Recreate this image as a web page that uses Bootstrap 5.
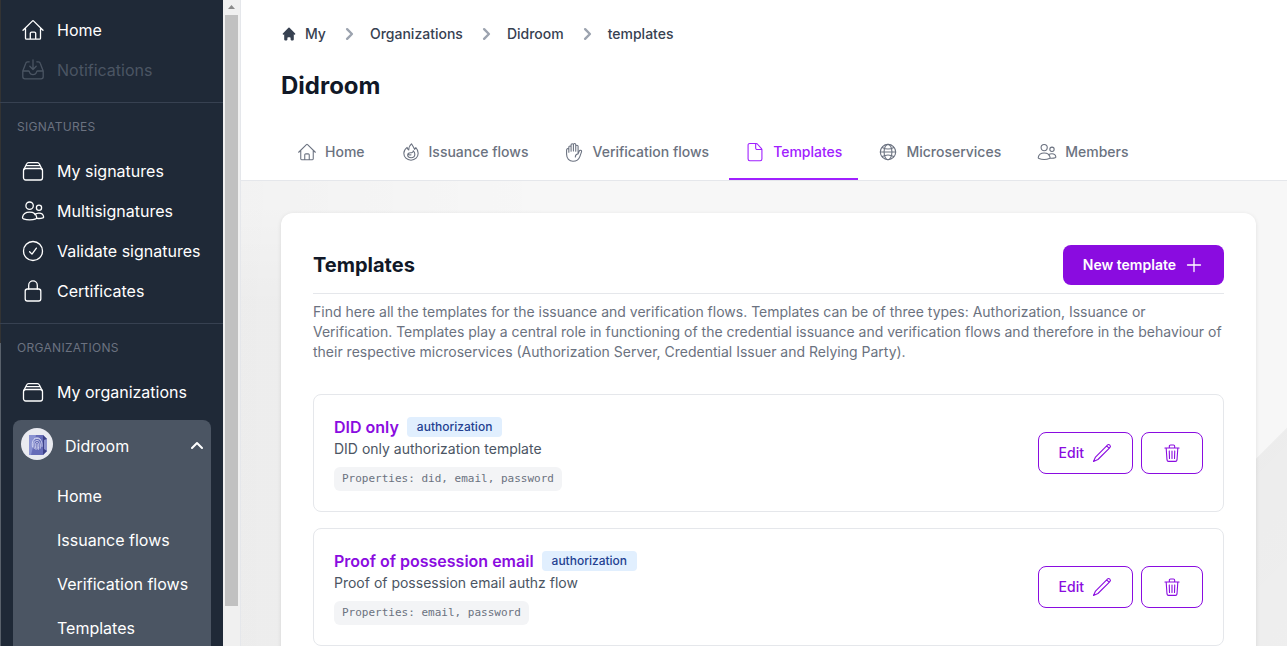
<!DOCTYPE html>
<html lang="en">
<head>
<meta charset="utf-8">
<meta name="viewport" content="width=device-width, initial-scale=1">
<title>Didroom – Templates</title>
<link href="https://cdn.jsdelivr.net/npm/bootstrap@5.3.0/dist/css/bootstrap.min.css" rel="stylesheet">
<style>
  :root { --line: #e5e7eb; --muted: #6b7280; --brand: #8a0ce0; --bright: #a020ff; }
  body { font-family: Inter, "Liberation Sans", sans-serif; font-size: 14px; line-height: 20px; color: #374151; }
  a { color: inherit; text-decoration: none; }
  .ico { fill: none; stroke: currentColor; stroke-width: 1.3; stroke-linecap: round; stroke-linejoin: round; flex: none; }
  .ico-bold { stroke-width: 2; }

  /* Sidebar */
  .side { flex: none; width: 241px; border-right: 1px solid var(--line); }
  .side-body { background: linear-gradient(#333 343px, #59616b 343px) 0 0 / 1px 100% no-repeat #1f2937; color: #fff; font-size: 16px; line-height: 24px; }
  .side-group { padding: 12px 12px 12px 13px; border-bottom: 1px solid #374151; }
  .side-group:first-child { padding-top: 10px; }
  .side-group:last-child { border-bottom: 0; }
  .side-link { padding: 8px; gap: 12px; }
  .side-link.off { color: #4b5563; }
  .side-label { font-size: 12px; line-height: 24px; color: var(--muted); padding: 0 4px; margin-bottom: 12px; letter-spacing: .025em; }
  .org { background: #4b5563; border-radius: 8px; margin-top: 8px; height: 400px; }
  .org-head { width: 100%; height: 52px; padding: 0 8px; gap: 12px; color: #fff; background: none; border: 0; }
  .org-logo { margin-bottom: 4px; }
  .org-menu { padding-top: 2px; }
  .org-link { padding: 10px 10px 10px 44px; }
  .bar { width: 17px; background: #f0f0f0; padding: 0 2px; }
  .bar-thumb { height: 591px; background: #c1c1c1; }

  /* Header */
  .top { padding: 22px 40px 0; border-bottom: 1px solid var(--line); }
  .crumbs { gap: 12px; height: 24px; font-weight: 500; }
  .crumbs .ico { color: #9ca3af; }
  .page-title { font-size: 24px; line-height: 32px; font-weight: 700; color: #111827; }
  .tabs { gap: 4px; font-weight: 500; }
  .tab-item { padding: 16px; border-bottom: 2px solid transparent; color: var(--muted); }
  .tab-item.active { color: var(--bright); border-color: var(--bright); }

  /* Content */
  .stage { padding: 32px 31px 32px 40px;
    background: linear-gradient(90deg, rgba(0,0,0,.02), transparent 30%),
      linear-gradient(135deg, transparent 85.5%, rgba(0,0,0,.045) 85.6%, rgba(0,0,0,.035)),
      linear-gradient(180deg, transparent 20px, rgba(0,0,0,.025) 120px) 0 0 / 300px 100% no-repeat #f7f7f7; }
  .panel { background: #fff; border-radius: 12px; padding: 32px; box-shadow: 0 1px 4px rgba(0,0,0,.1); }
  .panel-head { padding-bottom: 8px; border-bottom: 1px solid var(--line); }
  .panel-title { font-size: 20px; line-height: 28px; font-weight: 700; color: #111827; }
  .intro { color: var(--muted); margin: 8px 0 32px; }
  .tpl { border: 1px solid var(--line); border-radius: 8px; padding: 20px; color: #4b5563; }
  .tpl-name { font-size: 16px; line-height: 24px; font-weight: 600; color: var(--brand); }
  .tag { font-size: 12px; line-height: 20px; font-weight: 500; padding: 0 10px; border-radius: 4px; background: #e1effe; color: #233f91; }
  .props { font-family: "DejaVu Sans Mono", monospace; font-size: 11px; line-height: 24px; color: var(--muted); background: #f3f4f6; border-radius: 6px; padding: 0 8px; }
  .btn { --bs-btn-font-size: 14px; --bs-btn-line-height: 20px; --bs-btn-padding-x: 20px; --bs-btn-padding-y: 10px; --bs-btn-border-radius: 8px; }
  .btn-brand { --bs-btn-color: #fff; --bs-btn-bg: var(--brand); --bs-btn-hover-color: #fff; --bs-btn-hover-bg: #7509c0; --bs-btn-border-width: 0; --bs-btn-font-weight: 600; }
  .btn-line { --bs-btn-color: var(--brand); --bs-btn-border-color: var(--brand); --bs-btn-hover-color: #fff; --bs-btn-hover-bg: var(--brand); --bs-btn-font-weight: 500; }
</style>
</head>
<body>
<svg class="d-none">
  <symbol id="home" viewBox="0 0 24 24"><path d="M4.500 10.500v9.700a1 1 0 0 0 1 1h13a1 1 0 0 0 1-1v-9.700M2 12.300l9.300-9.200a1 1 0 0 1 1.400 0l9.300 9.200M9.300 21v-5.500a1.300 1.300 0 0 1 1.300-1.300h2.800a1.300 1.300 0 0 1 1.300 1.300V21"/></symbol>
  <symbol id="inbox" viewBox="0 0 24 24"><path d="M8.200 3.800H6.700c-1 0-1.800.6-2 1.600L1.800 13v5.700c0 1.200.9 2.100 2.100 2.100h16.200c1.200 0 2.100-.9 2.100-2.100V13l-2.900-7.600c-.2-1-1-1.600-2-1.600h-1.500M1.800 13h5.700c.7 0 .9.500 1 1.200.4 1.500 1.800 2.500 3.500 2.500s3.100-1 3.500-2.500c.1-.7.300-1.200 1-1.200h5.700M12 2v9.300M8.800 8.300 12 11.500l3.200-3.200"/></symbol>
  <symbol id="albums" viewBox="0 0 24 24"><rect x="2.500" y="9.500" width="19" height="11.500" rx="2.200"/><path d="M3 10.200 5.600 5c.4-.9.900-1.400 1.900-1.400h9c1 0 1.500.5 1.900 1.400l2.600 5.200M5 6.700h14"/></symbol>
  <symbol id="people" viewBox="0 0 24 24"><circle cx="8.600" cy="6.700" r="3.700"/><circle cx="18" cy="8.700" r="2.600"/><path d="M8.600 13.200c-3.800 0-6.600 2.200-7.100 5.200-.1.700.2 1.200.9 1.400 1.700.7 3.800 1.100 6.200 1.100s4.500-.4 6.200-1.100c.7-.2 1-.7.900-1.400-.5-3-3.300-5.200-7.100-5.200ZM13.800 15.500c1-.9 2.500-1.400 4.200-1.400 2.500 0 4.300 1.500 4.600 3.700.1.600-.1.900-.7 1.100-1.700.6-3.900.7-6.200.5"/></symbol>
  <symbol id="check" viewBox="0 0 24 24"><circle cx="12" cy="12" r="9.500"/><path d="m8.600 12.700 2.400 2.400 4.400-6"/></symbol>
  <symbol id="lock" viewBox="0 0 24 24"><rect x="4.200" y="10" width="15.600" height="12" rx="2.200"/><path d="M7.700 10V6.200a4.300 4.300 0 0 1 8.600 0V10"/></symbol>
  <symbol id="flame" viewBox="0 0 24 24"><path d="M12.600 2.200C10.400 3.900 9.400 6.300 9.300 9.500 8.100 8.900 7.500 7.900 7.300 6.400 4.800 8.300 3.400 10.900 3.400 13.600c0 4.700 3.700 8.200 8.600 8.200s8.600-3.500 8.600-8.200c0-2.700-1-4.900-2.800-6.800l-1.500 2C15.400 6.800 14 4.500 12.600 2.200Z"/><path d="M14.800 10.500c0 1.700-.8 2.300-2.200 2.500-2.900-.6-4.800.9-4.600 3 .3 1.900 1.900 2.800 4.100 2.800 2.800 0 4.500-1.700 4.500-4.200 0-1.600-.8-3-1.800-4.100ZM8.500 14.300c.8 1.200 2 1.600 3.500 1.100"/></symbol>
  <symbol id="hand" viewBox="0 0 24 24"><path d="M5.800 12.200V6.100a1.350 1.350 0 0 1 2.700 0V11M8.500 10.800V3.400a1.400 1.400 0 0 1 2.800 0v7.400M11.300 10V3.200a1.400 1.400 0 0 1 2.800 0v7.600M14.100 11V5.200a1.400 1.400 0 0 1 2.800 0v9M5.800 8.400c-1.400-1-2.700-.3-2.700 1.200v5.200c0 4.900 3.200 8.200 7.700 8.200 4.200 0 6.800-1.500 8.200-5.500l2-5.600c.4-1.100-.1-1.700-1-2-.9-.2-1.500.3-1.800 1.200l-1.300 3.100c-2.200.6-3.300 1.600-3.300 3.700"/></symbol>
  <symbol id="file" viewBox="0 0 24 24"><path d="M13.500 1.800H5.700a2 2 0 0 0-2 2v16.600a2 2 0 0 0 2 2h12.600a2 2 0 0 0 2-2V9.200a2 2 0 0 0-.5-1.300l-5-5.500a2 2 0 0 0-1.300-.6ZM12.800 1.900v5.400a1.700 1.700 0 0 0 1.700 1.700h5.600"/></symbol>
  <symbol id="globe" viewBox="0 0 24 24"><circle cx="12" cy="12" r="9.200"/><ellipse cx="12" cy="12" rx="4.700" ry="9.200"/><path d="M2.800 12h18.400M5 6.500c4 2.200 10 2.200 14 0M5 17.500c4-2.200 10-2.200 14 0"/></symbol>
  <symbol id="pencil" viewBox="0 0 24 24"><path d="M17.600 3.400 4.200 16.900l-2.400 5.300 5.300-2.400L20.600 6.400ZM17.600 3.400l.8-.8a2.100 2.100 0 0 1 3 3l-.8.8"/></symbol>
  <symbol id="trash" viewBox="0 0 24 24"><path d="m5 6 1 14.300c.1 1 .8 1.700 1.800 1.700h8.400c1 0 1.700-.7 1.800-1.700L19 6M3.500 6h17M8.800 6V3.900c0-.9.600-1.500 1.500-1.500h3.400c.9 0 1.500.6 1.500 1.500V6M12 9.500v9M8.700 9.500l.3 9M15.300 9.500l-.3 9"/></symbol>
  <symbol id="chev" viewBox="0 0 20 20"><path d="m7.600 6 4 4-4 4"/></symbol>
</svg>

<div class="d-flex vh-100 overflow-hidden">
  <aside class="side d-flex overflow-hidden">
    <nav class="side-body flex-grow-1" aria-label="Main">
      <div class="side-group">
        <a class="side-link d-flex" href="#"><svg class="ico" width="24" height="24"><use href="#home"/></svg>Home</a>
        <a class="side-link off d-flex" href="#"><svg class="ico" width="24" height="24"><use href="#inbox"/></svg>Notifications</a>
      </div>
      <div class="side-group">
        <div class="side-label">SIGNATURES</div>
        <a class="side-link d-flex" href="#"><svg class="ico" width="24" height="24"><use href="#albums"/></svg>My signatures</a>
        <a class="side-link d-flex" href="#"><svg class="ico" width="24" height="24"><use href="#people"/></svg>Multisignatures</a>
        <a class="side-link d-flex" href="#"><svg class="ico" width="24" height="24"><use href="#check"/></svg>Validate signatures</a>
        <a class="side-link d-flex" href="#"><svg class="ico" width="24" height="24"><use href="#lock"/></svg>Certificates</a>
      </div>
      <div class="side-group">
        <div class="side-label">ORGANIZATIONS</div>
        <a class="side-link d-flex" href="#"><svg class="ico" width="24" height="24"><use href="#albums"/></svg>My organizations</a>
        <div class="org">
          <button class="org-head d-flex align-items-center text-start" type="button" aria-expanded="true">
            <svg width="32" height="32" viewBox="0 0 32 32" class="org-logo flex-shrink-0">
              <circle cx="16" cy="16" r="16" fill="#e9eaf0"/>
              <path d="M8 7h14l4 4v12l-4 4H8z" fill="#666cb8"/><path d="M8 7h7l-5 20H8z" fill="#8a92d2"/><path d="m22 7 4 4v12l-4 4z" fill="#3c4087"/><path d="m23 12 3-1v12l-3-2z" fill="#8b91ce"/>
              <g fill="none" stroke="#dfe2f7" stroke-width=".8" stroke-linecap="round"><path d="M11.500 19c-1-6 1-8.500 4.500-8.500s5.500 2.800 5 8M13.300 20.500c-1.200-5 0-8 2.700-8s3.700 2.500 3.200 7.800M15 21.500c-1-4-.8-7 1-7s1.900 2.500 1.300 7M16.100 16.500l.1 4M13 11c1.500-1.800 5-1.800 6.500.5"/></g>
            </svg>
            <span class="flex-grow-1">Didroom</span>
            <svg class="ico ico-bold" width="12" height="20" viewBox="0 0 12 20"><path d="m1 12 5-5 5 5"/></svg>
          </button>
          <div class="org-menu">
            <a class="org-link d-block" href="#">Home</a>
            <a class="org-link d-block" href="#">Issuance flows</a>
            <a class="org-link d-block" href="#">Verification flows</a>
            <a class="org-link d-block" href="#">Templates</a>
          </div>
        </div>
      </div>
    </nav>
    <div class="bar flex-shrink-0" aria-hidden="true">
      <svg class="d-block mx-auto" width="13" height="15" viewBox="0 0 13 15"><path d="m3 9 3.500-4L10 9z" fill="#8b8b8b"/></svg>
      <div class="bar-thumb"></div>
    </div>
  </aside>

  <div class="flex-grow-1 d-flex flex-column overflow-hidden">
    <header class="top bg-white">
      <nav class="crumbs d-flex align-items-center" aria-label="Breadcrumb">
        <a class="d-flex align-items-center gap-2" href="#"><svg width="16" height="16" viewBox="0 0 20 20" fill="#374151"><path d="M10.700 2.300a1 1 0 0 0-1.400 0l-7 7a1 1 0 0 0 1.400 1.400L4 10.400V17a1 1 0 0 0 1 1h2a1 1 0 0 0 1-1v-2a1 1 0 0 1 1-1h2a1 1 0 0 1 1 1v2a1 1 0 0 0 1 1h2a1 1 0 0 0 1-1v-6.600l.3.300a1 1 0 0 0 1.400-1.400z"/></svg>My</a>
        <span class="d-flex align-items-center gap-2"><svg class="ico ico-bold" width="24" height="24"><use href="#chev"/></svg><a href="#">Organizations</a></span>
        <span class="d-flex align-items-center gap-2"><svg class="ico ico-bold" width="24" height="24"><use href="#chev"/></svg><a href="#">Didroom</a></span>
        <span class="d-flex align-items-center gap-2"><svg class="ico ico-bold" width="24" height="24"><use href="#chev"/></svg><a href="#">templates</a></span>
      </nav>
      <h1 class="page-title mt-4 mb-4">Didroom</h1>
      <nav class="tabs d-flex" aria-label="Organization">
        <a class="tab-item d-flex gap-2" href="#"><svg class="ico" width="20" height="20"><use href="#home"/></svg>Home</a>
        <a class="tab-item d-flex gap-2" href="#"><svg class="ico" width="20" height="20"><use href="#flame"/></svg>Issuance flows</a>
        <a class="tab-item d-flex gap-2" href="#"><svg class="ico" width="20" height="20"><use href="#hand"/></svg>Verification flows</a>
        <a class="tab-item active d-flex gap-2" href="#" aria-current="page"><svg class="ico" width="20" height="20"><use href="#file"/></svg>Templates</a>
        <a class="tab-item d-flex gap-2" href="#"><svg class="ico" width="20" height="20"><use href="#globe"/></svg>Microservices</a>
        <a class="tab-item d-flex gap-2" href="#"><svg class="ico" width="20" height="20"><use href="#people"/></svg>Members</a>
      </nav>
    </header>

    <main class="stage flex-grow-1 overflow-hidden">
      <section class="panel">
        <div class="panel-head d-flex justify-content-between align-items-center">
          <h2 class="panel-title mb-0">Templates</h2>
          <button class="btn btn-brand d-flex align-items-center gap-2" type="button">New template<svg class="ico" width="20" height="20" viewBox="0 0 20 20"><path d="M10 3.500v13M3.500 10h13"/></svg></button>
        </div>
        <p class="intro">Find here all the templates for the issuance and verification flows. Templates can be of three types: Authorization, Issuance or Verification. Templates play a central role in functioning of the credential issuance and verification flows and therefore in the behaviour of their respective microservices (Authorization Server, Credential Issuer and Relying Party).</p>
        <div class="d-flex flex-column gap-3">
          <article class="tpl d-flex justify-content-between align-items-center">
            <div>
              <div class="d-flex align-items-center gap-2"><a class="tpl-name" href="#">DID only</a><span class="tag">authorization</span></div>
              <div class="mb-2">DID only authorization template</div>
              <div class="d-flex"><span class="props">Properties: did, email, password</span></div>
            </div>
            <div class="d-flex gap-2">
              <button class="btn btn-line d-flex gap-2" type="button">Edit<svg class="ico" width="20" height="20"><use href="#pencil"/></svg></button>
              <button class="btn btn-line d-flex" type="button" aria-label="Delete"><svg class="ico" width="20" height="20"><use href="#trash"/></svg></button>
            </div>
          </article>
          <article class="tpl d-flex justify-content-between align-items-center">
            <div>
              <div class="d-flex align-items-center gap-2"><a class="tpl-name" href="#">Proof of possession email</a><span class="tag">authorization</span></div>
              <div class="mb-2">Proof of possession email authz flow</div>
              <div class="d-flex"><span class="props">Properties: email, password</span></div>
            </div>
            <div class="d-flex gap-2">
              <button class="btn btn-line d-flex gap-2" type="button">Edit<svg class="ico" width="20" height="20"><use href="#pencil"/></svg></button>
              <button class="btn btn-line d-flex" type="button" aria-label="Delete"><svg class="ico" width="20" height="20"><use href="#trash"/></svg></button>
            </div>
          </article>
        </div>
      </section>
    </main>
  </div>
</div>
<script src="https://cdn.jsdelivr.net/npm/bootstrap@5.3.0/dist/js/bootstrap.bundle.min.js"></script>
</body>
</html>
